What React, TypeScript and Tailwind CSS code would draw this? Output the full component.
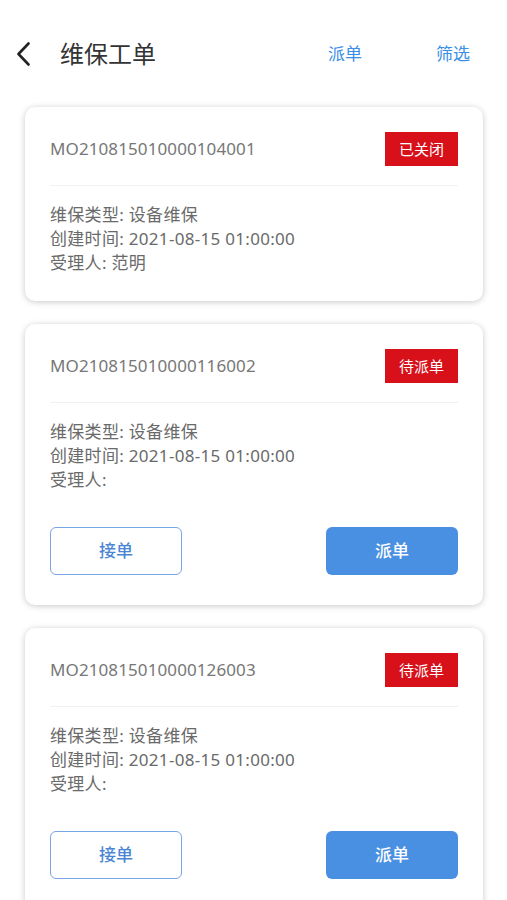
import React from "react";

type Order = {
  id: string;
  status: string;
  type: string;
  time: string;
  person: string;
  actions: boolean;
};

const orders: Order[] = [
  { id: "MO210815010000104001", status: "已关闭", type: "设备维保", time: "2021-08-15 01:00:00", person: "范明", actions: false },
  { id: "MO210815010000116002", status: "待派单", type: "设备维保", time: "2021-08-15 01:00:00", person: "", actions: true },
  { id: "MO210815010000126003", status: "待派单", type: "设备维保", time: "2021-08-15 01:00:00", person: "", actions: true },
];

function Card({ o }: { o: Order }) {
  return (
    <div
      className={
        "mx-[25px] w-[458px] shrink-0 rounded-[10px] bg-white px-[25px] pt-[25px] shadow-[0_1px_6px_rgba(0,0,0,0.22)] " +
        (o.actions ? "pb-[30px]" : "pb-[26px]")
      }
    >
      <div className="flex items-center justify-between">
        <span className="text-[17px] text-[#777777] tracking-[0.1px]">{o.id}</span>
        <span className="flex h-[34px] w-[73px] items-center justify-center bg-[#d7101a] text-[15px] text-white">
          {o.status}
        </span>
      </div>
      <div className="mt-[19px] h-px bg-[#f1f1f1]" />
      <div className="mt-[17px] text-[17px] leading-[24px] tracking-[0.3px] text-[#6a6a6a]">
        <div>维保类型: {o.type}</div>
        <div>创建时间: {o.time}</div>
        <div>受理人: {o.person}</div>
      </div>
      {o.actions && (
        <div className="mt-[35px] flex justify-between">
          <button className="flex h-[48px] w-[132px] items-center justify-center rounded-[6px] border border-[#79a6e6] bg-white text-[17px] font-medium text-[#4a86d4]">
            接单
          </button>
          <button className="flex h-[48px] w-[132px] items-center justify-center rounded-[6px] bg-[#4a90e2] text-[17px] font-medium text-white">
            派单
          </button>
        </div>
      )}
    </div>
  );
}

export default function App() {
  return (
    <div className="min-h-[900px] w-[507px] overflow-hidden bg-white font-['Noto_Sans','Noto_Sans_CJK_SC',sans-serif]">
      <div className="mt-[30px] flex h-[48px] items-center">
        <svg className="ml-[16px]" width="14" height="24" viewBox="0 0 14 24" fill="none">
          <path d="M12.5 1.5 L2.5 12 L12.5 22.5" stroke="#222" strokeWidth="2.6" strokeLinecap="round" strokeLinejoin="round" />
        </svg>
        <span className="ml-[30px] text-[24px] text-[#333333]">维保工单</span>
        <span className="ml-auto text-[17px] text-[#3a8ee6]">派单</span>
        <span className="ml-[74px] mr-[37px] text-[17px] text-[#3a8ee6]">筛选</span>
      </div>
      <div className="mt-[29px] flex flex-col gap-[23px]">
        {orders.map((o) => (
          <Card key={o.id} o={o} />
        ))}
      </div>
    </div>
  );
}
